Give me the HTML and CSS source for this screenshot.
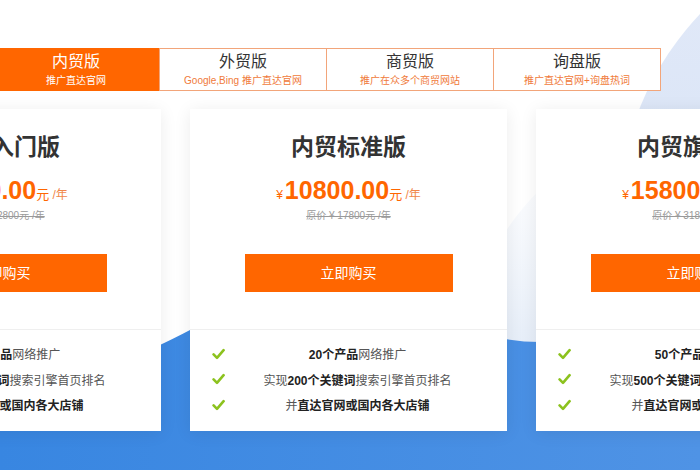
FILE: index.html
```html
<!DOCTYPE html>
<html lang="zh-CN">
<head>
<meta charset="utf-8">
<title>内贸版价格</title>
<link rel="stylesheet" href="styles.css">
</head>
<body>
<div class="page">
  <svg class="bg" viewBox="0 0 700 470" width="700" height="470" aria-hidden="true">
    <defs>
      <linearGradient id="pale" x1="0" y1="0" x2="0" y2="1">
        <stop offset="0" stop-color="#e3eaf8"/>
        <stop offset="1" stop-color="#cfdef5"/>
      </linearGradient>
      <linearGradient id="pale2" x1="0" y1="0" x2="0" y2="1">
        <stop offset="0" stop-color="#f4f7fc" stop-opacity="0"/>
        <stop offset="0.35" stop-color="#e8eff9"/>
        <stop offset="1" stop-color="#b9d0f1"/>
      </linearGradient>
      <linearGradient id="blue" x1="0" y1="0" x2="1" y2="0">
        <stop offset="0" stop-color="#3886e1"/>
        <stop offset="1" stop-color="#4f93e5"/>
      </linearGradient>
    </defs>
    <circle cx="918" cy="220" r="300" fill="url(#pale)"/>
    <ellipse cx="700" cy="420" rx="250" ry="300" fill="url(#pale2)"/>
    <path d="M0,420 L100,372 Q160,346 190,330 Q330,270 470,330 Q505,342 540,342 L700,340 L700,470 L0,470 Z" fill="url(#blue)"/>
  </svg>

  <div class="content">
    <div class="tabs">
      <div class="tab active">
        <div class="tab-title">内贸版</div>
        <div class="tab-sub">推广直达官网</div>
      </div>
      <div class="tab">
        <div class="tab-title">外贸版</div>
        <div class="tab-sub">Google,Bing 推广直达官网</div>
      </div>
      <div class="tab">
        <div class="tab-title">商贸版</div>
        <div class="tab-sub">推广在众多个商贸网站</div>
      </div>
      <div class="tab">
        <div class="tab-title">询盘版</div>
        <div class="tab-sub">推广直达官网+询盘热词</div>
      </div>
    </div>

    <div class="cards">
      <div class="card">
        <div class="card-top">
          <div class="card-title">内贸入门版</div>
          <div class="price"><span class="yen">¥</span><span class="num">6800.00</span><span class="unit">元</span><span class="per">&nbsp;/年</span></div>
          <div class="orig">原价 ¥ 12800元 /年</div>
          <a class="buy">立即购买</a>
        </div>
        <ul class="features">
          <li><svg class="check" viewBox="0 0 13 12"><path d="M1.6 6.4 L5 9.8 L11.6 2.2"/></svg><span class="ftext"><b>10个产品</b>网络推广</span></li>
          <li><svg class="check" viewBox="0 0 13 12"><path d="M1.6 6.4 L5 9.8 L11.6 2.2"/></svg><span class="ftext">实现<b>100个关键词</b>搜索引擎首页排名</span></li>
          <li><svg class="check" viewBox="0 0 13 12"><path d="M1.6 6.4 L5 9.8 L11.6 2.2"/></svg><span class="ftext">并<b>直达官网或国内各大店铺</b></span></li>
        </ul>
      </div>

      <div class="card">
        <div class="card-top">
          <div class="card-title">内贸标准版</div>
          <div class="price"><span class="yen">¥</span><span class="num">10800.00</span><span class="unit">元</span><span class="per">&nbsp;/年</span></div>
          <div class="orig">原价 ¥ 17800元 /年</div>
          <a class="buy">立即购买</a>
        </div>
        <ul class="features">
          <li><svg class="check" viewBox="0 0 13 12"><path d="M1.6 6.4 L5 9.8 L11.6 2.2"/></svg><span class="ftext"><b>20个产品</b>网络推广</span></li>
          <li><svg class="check" viewBox="0 0 13 12"><path d="M1.6 6.4 L5 9.8 L11.6 2.2"/></svg><span class="ftext">实现<b>200个关键词</b>搜索引擎首页排名</span></li>
          <li><svg class="check" viewBox="0 0 13 12"><path d="M1.6 6.4 L5 9.8 L11.6 2.2"/></svg><span class="ftext">并<b>直达官网或国内各大店铺</b></span></li>
        </ul>
      </div>

      <div class="card">
        <div class="card-top">
          <div class="card-title">内贸旗舰版</div>
          <div class="price"><span class="yen">¥</span><span class="num">15800.00</span><span class="unit">元</span><span class="per">&nbsp;/年</span></div>
          <div class="orig">原价 ¥ 31800元 /年</div>
          <a class="buy">立即购买</a>
        </div>
        <ul class="features">
          <li><svg class="check" viewBox="0 0 13 12"><path d="M1.6 6.4 L5 9.8 L11.6 2.2"/></svg><span class="ftext"><b>50个产品</b>网络推广</span></li>
          <li><svg class="check" viewBox="0 0 13 12"><path d="M1.6 6.4 L5 9.8 L11.6 2.2"/></svg><span class="ftext">实现<b>500个关键词</b>搜索引擎首页排名</span></li>
          <li><svg class="check" viewBox="0 0 13 12"><path d="M1.6 6.4 L5 9.8 L11.6 2.2"/></svg><span class="ftext">并<b>直达官网或国内各大店铺</b></span></li>
        </ul>
      </div>
    </div>
  </div>
</div>
</body>
</html>
```

FILE: styles.css
```css
html, body {
  margin: 0;
  padding: 0;
}

body {
  width: 700px;
  height: 470px;
  overflow: hidden;
  background: #fff;
  font-family: "Liberation Sans", "Noto Sans CJK SC", sans-serif;
}

.page {
  position: relative;
  width: 700px;
  height: 470px;
  overflow: hidden;
}

.bg {
  position: absolute;
  left: 0;
  top: 0;
  z-index: 0;
}

.content {
  position: relative;
  z-index: 1;
  padding-top: 48px;
}

/* Tabs */
.tabs {
  display: flex;
  margin-left: -8px;
}

.tab {
  flex: 0 0 168px;
  width: 168px;
  height: 43px;
  box-sizing: border-box;
  border: 1px solid #f2a57a;
  margin-left: -1px;
  background: #fff;
  text-align: center;
}

.tab:first-child {
  margin-left: 0;
}

.tab-title {
  font-size: 16px;
  line-height: 20px;
  padding-top: 3px;
  color: #333;
}

.tab-sub {
  font-size: 10px;
  line-height: 14px;
  margin-top: 2px;
  color: #f07a3a;
}

.tab.active {
  background: #ff6600;
  border-color: #ff6600;
}

.tab.active .tab-title,
.tab.active .tab-sub {
  color: #fff;
}

/* Cards */
.cards {
  display: flex;
  gap: 29px;
  margin-left: -156px;
  margin-top: 18px;
}

.card {
  flex: 0 0 317px;
  width: 317px;
  height: 322px;
  background: #fff;
  box-shadow: 0 2px 16px rgba(0, 0, 0, 0.08);
}

.card-top {
  height: 221px;
  box-sizing: border-box;
  padding-top: 22px;
  border-bottom: 1px solid #efefef;
  text-align: center;
}

.card-title {
  font-size: 23px;
  line-height: 32px;
  font-weight: bold;
  color: #333;
}

.price {
  margin-top: 12px;
  height: 30px;
  display: flex;
  justify-content: center;
  align-items: baseline;
  color: #ff6600;
  line-height: 30px;
}

.yen {
  font-size: 12px;
  margin-right: 2px;
}

.num {
  font-size: 25px;
  font-weight: bold;
}

.unit {
  font-size: 13px;
}

.per {
  font-size: 12px;
  color: #f0874a;
}

.orig {
  margin-top: 3px;
  font-size: 10px;
  line-height: 16px;
  color: #9a9a9a;
  text-decoration: line-through;
}

.buy {
  display: block;
  width: 208px;
  height: 38px;
  line-height: 38px;
  margin: 30px auto 0;
  background: #ff6600;
  color: #fff;
  font-size: 14px;
  text-decoration: none;
}

.features {
  list-style: none;
  margin: 0;
  padding: 11px 17px 0 22px;
}

.features li {
  display: flex;
  align-items: center;
  height: 25.5px;
}

.check {
  flex: none;
  width: 13px;
  height: 12px;
}

.check path {
  fill: none;
  stroke: #8cc21e;
  stroke-width: 2.6;
  stroke-linecap: round;
  stroke-linejoin: round;
}

.ftext {
  flex: 1;
  text-align: center;
  font-size: 12px;
  color: #555;
  white-space: nowrap;
}

.ftext b {
  color: #222;
  font-weight: bold;
}
```
